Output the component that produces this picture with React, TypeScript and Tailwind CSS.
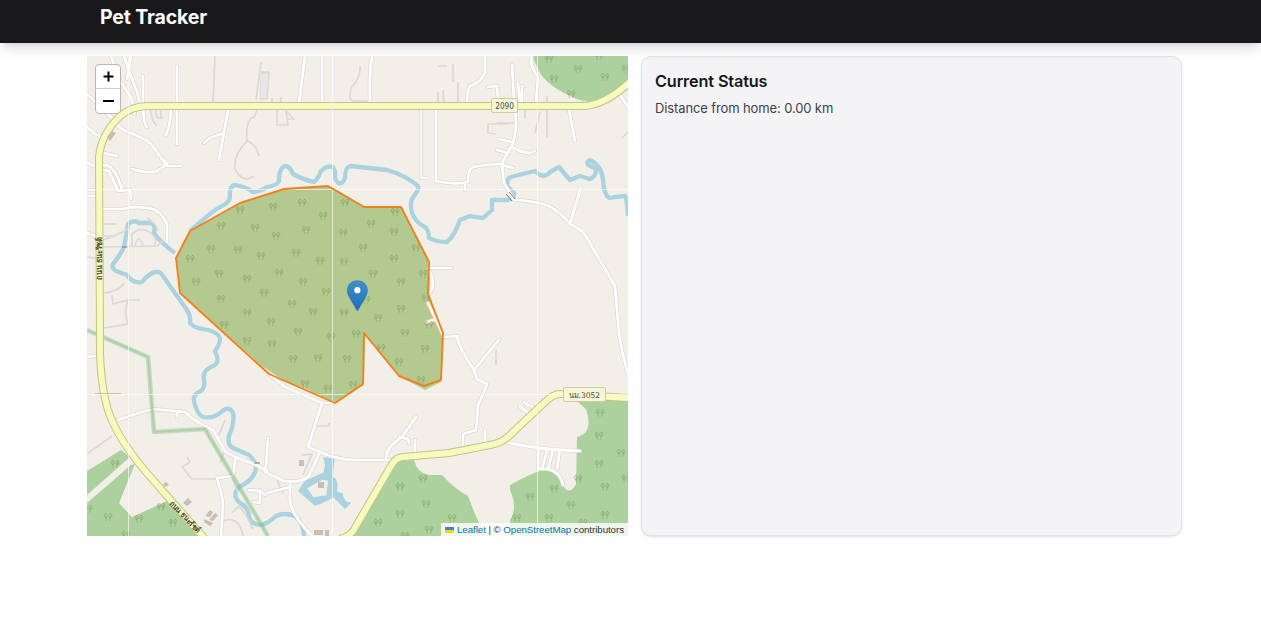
import React from "react";

const FOREST = "176,258 190,231 240,203 284,189 330,186 366,207 402,208 430,262 429,294 443,333 441,382 425,390 399,376 365,335 364,385 335,404 309,390 285,381 262,366 180,293";
const FENCE = "176,258 190,231 240,203 284,189 328,186 364,207 401,207 429,262 428,294 443,333 441,380 424,386 399,376 364,333 363,384 335,403 269,374 180,293";

const RIVERS = [
  "M175 253Q162 244 154 233Q156 224 150 223L139 223Q134 219 128 224Q126 236 124 247Q119 257 113 264Q111 268 116 271L127 275Q133 284 142 282Q149 273 156 272Q160 271 163 276L187 310Q191 316 190 323Q194 328 203 329Q215 331 219 336Q222 341 215 351Q221 363 213 366Q202 370 204 380Q206 390 197 393Q192 397 195 405Q198 415 203 417Q214 419 221 412Q229 405 233 413Q235 421 229 436Q227 445 233 448L249 455Q258 463 255 472Q252 481 239 487Q231 495 240 503Q248 507 249 516Q251 525 261 525Q269 523 276 516Q284 512 295 516Q304 523 304 537",
  "M190 231L204 219Q213 211 220 207Q230 203 230 196Q229 185 236 185Q246 187 253 192Q262 191 267 187Q278 185 279 181Q279 168 285 166Q290 166 293 174Q304 180 314 182Q318 179 321 171Q327 165 333 167Q336 171 335 178Q340 189 345 178Q345 167 350 166L387 170Q405 175 418 186Q420 188 414 196Q409 201 412 213Q416 223 425 227Q429 230 429 238Q436 242 447 242Q455 235 460 220L470 216L483 218L492 210V200H507Q515 199 514 193L507 186Q507 178 511 177Q522 174 535 171Q544 180 550 172L559 167L570 180L580 176L590 179Q598 175 595 168Q583 164 590 160Q602 166 603 180Q604 195 609 198Q622 196 625 196Q627 199 628 216",
];

const ROADS = [
  "M111 56Q117 78 124 87Q134 100 135 113M124 56L130 74Q139 95 140 105M131 56Q129 69 127 79",
  "M143 76V106L144 119Q145 125 147 127M177 66V144M171 109Q170 128 166 135M228 110L219 160M222 134Q209 137 204 143",
  "M87 94L112 118Q119 129 128 132Q146 139 151 144Q160 156 166 165M166 165L157 171Q148 174 132 169M164 160L168 166L181 166",
  "M87 127Q94 134 101 137M99 152L117 156M99 169L109 171L118 191L130 190L131 199M87 162Q96 169 104 165Q115 165 122 190M87 190H97M87 196H97",
  "M102 209H122Q135 206 148 208Q160 209 167 224L167 242M87 233L99 237M87 357L99 355",
  "M305 56L299 103M322 56V103M372 56Q369 75 370 103M436 109V181Q456 185 468 182Q468 169 473 167Q487 164 501 164M465 183V190",
  "M485 56V72Q481 83 470 86Q467 92 467 103M512 65L514 100Q519 133 511 147Q503 160 502 165L504 183L514 200Q542 201 554 209Q567 219 570 224Q583 230 587 238L615 286L619 334Q622 354 628 374",
  "M502 165L513 168M508 153L497 150M512 147Q528 156 535 151M512 142L499 139M570 224L581 187M569 110L575 141M536 103L538 77Q529 66 532 56M518 83L520 103M522 86V102M488 87L497 86L498 100M621 96L630 110",
  "M429 268H451M429 294Q436 284 430 272M427 322L436 319M428 303L444 337L457 336Q459 348 474 370L499 340M474 370L477 379L487 384Q483 395 478 405L476 430L463 434V448M485 431V443M520 407L531 414M524 402L535 409",
  "M506 442Q534 449 580 451M538 448V469H547Q560 471 563 485M547 450L542 469M553 450L548 469M560 450L557 469",
  "M335 403L322 403L308 447L330 456Q349 461 362 460L394 460M269 374L285 387L322 403M416 417L402 437Q386 447 386 459M400 437L408 439L409 443M415 440V455",
  "M319 454L309 476Q302 483 284 481L267 473M268 438L266 466Q263 474 267 471L254 464Q232 457 225 451L213 430Q198 424 185 412L154 409Q140 412 118 420M177 412V417M267 493L290 487M290 481V495Q287 510 312 536M236 457L233 476L217 478Q223 497 223 505L221 536M249 490Q261 490 265 495M253 502L260 503V490",
];

const MINOR = [
  "M215 56L213 103M261 62L256 100M261 72H269L267 99H260M257 110L254 117Q245 120 247 141M247 141Q233 155 235 169Q243 184 254 176M247 141Q256 144 259 156M360 66Q361 77 352 87Q346 103 358 101H370M150 109L153 121L157 126M156 109Q156 122 163 117M161 108V118M272 98V103M281 97V103M277 109V125H288L286 111L294 119H287M438 66H447M438 92V104M443 90L444 103M453 64V82M458 82V103M497 123H515V110M525 110V119M508 124L488 124V133L496 134M547 96V137M540 112L535 133M628 132L622 138",
  "M147 218Q156 223 158 231M104 224H116M104 236H114M129 228Q117 236 102 240M87 257L99 259M112 295L113 304L128 300L140 300M128 300Q123 313 128 324Q112 327 102 328M104 293Q120 291 124 283M104 247L157 246L164 240M132 246V234Q141 226 151 233Q158 240 154 245M135 246Q138 232 143 245M87 454L112 436M187 457L190 462L182 467L192 479H216M225 420L219 435M225 450L220 463M232 478L238 492M317 426H329V423M302 455L312 454L303 475M277 480L283 494M232 513L239 506L246 515Q250 523 253 529M223 521Q239 515 243 536M496 365V350",
];

const TREES = [
  [240,210],[273,207],[302,203],[345,203],[221,226],[255,228],[276,236],[306,230],[323,216],[343,233],[371,224],[394,232],[395,212],
  [190,259],[211,249],[238,250],[261,256],[296,253],[320,261],[344,262],[363,248],[394,259],[416,248],
  [196,282],[219,274],[247,279],[264,293],[279,273],[303,282],[326,292],[373,274],[401,282],[423,274],[426,298],
  [221,299],[247,313],[292,304],[313,312],[344,313],[366,300],[378,318],[401,309],[429,325],
  [224,325],[247,341],[271,322],[298,332],[331,337],[356,334],[405,333],[272,344],[293,359],[318,358],[347,359],[381,348],[399,362],[425,349],
  [305,384],[328,389],[353,385],[421,380],
  [549,59],[578,69],[554,79],[605,77],[599,56],[571,94],[626,69],
  [600,413],[599,436],[621,453],[599,464],[578,479],[605,487],[554,489],[530,497],[571,505],[605,515],[583,523],[549,518],[517,518],[626,479],
  [400,487],[423,479],[426,504],[400,514],[378,523],[429,530],[452,518],[405,536],
  [115,464],[88,509],[108,517],[139,519],[173,523],[161,507],[126,535],
];

function MapDrawing() {
  return (
    <svg className="block h-full w-full" viewBox="87 56 541 480" role="img" aria-label="Map">
      <rect x="87" y="56" width="541" height="480" fill="#f2efe9" />
      <g fill="#add19e">
        <path d="M532 56H628V82Q615 99 601 101Q584 104 568 95Q543 83 537 67Z" />
        <path d="M393 461L414 460Q417 473 429 475L442 475Q455 489 468 496L475 514L485 536H362L352 536Z" />
        <path d="M578 402L628 397V536H510V520Q518 508 510 490V485Q537 470 548 469Q562 472 563 486Q570 496 576 484L577 437Q594 433 586 409Z" />
        <path d="M87 471L121 450L130 457L87 495ZM87 503L131 465L135 464L119 503L132 517L167 501L204 536H87Z" />
      </g>
      <g fill="none" stroke="#aad3df" strokeWidth="4.3" strokeLinejoin="round">
        {RIVERS.map((d) => <path key={d} d={d} />)}
      </g>
      <path d="M324 458L334 459L332 477Q339 481 336 492L342 494Q344 504 350 503L345 508L333 496Q328 501 315 505L299 491L305 482L324 473L326 465ZM322 479L306 488L313 498L327 496L329 480Z" fill="#aad3df" stroke="#aad3df" strokeWidth="1.5" strokeLinejoin="round" fillRule="evenodd" />
      <polygon points={FOREST} fill="#add19e" />

      <g fill="none" strokeLinejoin="round">
        {MINOR.map((d) => <path key={d} d={d} stroke="#dcd8d6" strokeWidth="1.7" />)}
        <path d="M261 73H269L267 98L260 99Z" fill="#e9e7e6" stroke="#d5d2d3" strokeWidth="0.7" />
        <path d="M421 110V178L429 178" stroke="#d6d2d1" strokeWidth="4" />
        <path d="M421 110V178L429 178" stroke="#f8f7f6" strokeWidth="2.8" />
        {ROADS.map((d) => <path key={d} d={d} stroke="#dad6d3" strokeWidth="4" strokeLinecap="round" />)}
        {ROADS.map((d) => <path key={d} d={d} stroke="#fff" strokeWidth="2.7" strokeLinecap="round" />)}
        <path d="M87 330L148 357L154 432L205 429L268 536" stroke="#7ab778" strokeOpacity=".38" strokeWidth="4.5" />
        <path d="M87 330L148 357L154 432L205 429L268 536" stroke="#8cbe88" strokeOpacity=".4" strokeWidth="1.5" />
        {["#c2c583", "#f7fabf"].map((stroke, i) => (
          <g key={stroke} stroke={stroke} strokeWidth={i === 0 ? 8 : 6}>
            <path d="M206 540L167 496L147 473Q118 439 109 413Q99 383 100 335L99 157Q101 135 119 117Q132 106 147 106H580Q603 107 630 82" />
            <path d="M340 539Q352 536 356 526L391 466Q396 457 403 457L449 453L490 445Q503 443 511 434L545 402Q554 393 562 394L630 398" />
          </g>
        ))}
      </g>

      <g fill="#c9bdb5">
        <path d="M107 137L112 131L116 133L110 141ZM183 503L188 498L192 502L187 506ZM163 484L166 482L169 485L165 487Z" />
        <path d="M205 516L210 510L213 512L210 517ZM209 520L215 513L218 515L213 521ZM204 519L213 523L210 526L204 522ZM299 460H304V466H299ZM318 482H324V488H318ZM314 530H323V535H314ZM325 530H329V536H325Z" />
        <path d="M506 194L512 201M509 192L515 199M254 463H260M122 247H127" stroke="#777" strokeWidth="1" />
      </g>

      <polygon points={FENCE} fill="#ff7800" fillOpacity=".09" />
      <g fill="none" stroke="#708b51" strokeOpacity=".42" strokeWidth=".9" strokeLinecap="round">
        {TREES.map(([x, y], i) => (
          <path key={i} transform={`translate(${x} ${y})`} d="M-2.2 -3.6C-4.6 -3.4 -4.3 .6 -2.2 .6C-.2 .6 -.1 -3.5 -2.2 -3.6M-2.2 -1.5L-1.8 3.5M2.4 -3.6C.1 -3.4 .4 .6 2.4 .6C4.5 .6 4.5 -3.5 2.4 -3.6M2.4 -1.5L1.8 3.5" />
        ))}
      </g>
      <path d="M128.5 56V536M332.5 56V536M537.5 56V536M87 189.5H628M87 394.5H628" stroke="#fff" strokeOpacity=".62" />
      <path d="M95 393.5H121" stroke="#aaa66b" strokeOpacity=".6" />
      <polygon points={FENCE} fill="none" stroke="#f2811d" strokeWidth="1.9" strokeLinejoin="round" />

      <g fill="#f5f6d5" stroke="#cccda0">
        <rect x="491.5" y="98.5" width="26" height="14" rx="1.5" />
        <rect x="563.5" y="387.5" width="42" height="14" rx="1.5" />
      </g>
      <g fill="#4b4b3d" textAnchor="middle" className="font-['DejaVu_Sans','Noto_Sans',sans-serif]">
        <text x="504.5" y="108.7" fontSize="8" textLength="18.5" lengthAdjust="spacingAndGlyphs">2090</text>
        <text x="584.5" y="397.5" fontSize="7.8" textLength="31" lengthAdjust="spacingAndGlyphs">นม.3052</text>
        <text transform="translate(102 258.5) rotate(-90)" fontSize="8" fontWeight="600" textLength="42" lengthAdjust="spacingAndGlyphs">ถนน ธนะรัชต์</text>
        <text transform="translate(183 518.5) rotate(47)" fontSize="8" fontWeight="600" textLength="41" lengthAdjust="spacingAndGlyphs">ถนน ธนะรัชต์</text>
      </g>

      <defs>
        <linearGradient id="pin-blue" x1="0" y1="0" x2="0" y2="1">
          <stop stopColor="#4290cf" />
          <stop offset="1" stopColor="#1b6cb5" />
        </linearGradient>
      </defs>
      <path d="M357.4 311L349.5 297.5Q347.4 294 347.4 290.5C347.4 277.5 367.4 277.5 367.4 290.5Q367.4 294 365.2 297.5Z" fill="url(#pin-blue)" stroke="#2e79b7" strokeWidth=".7" />
      <circle cx="357.4" cy="290.2" r="3.1" fill="#fff" />
    </svg>
  );
}

function MapPanel() {
  return (
    <section className="relative h-[480px] w-[541px] shrink-0 overflow-hidden">
      <MapDrawing />
      <div className="absolute left-2 top-2 flex h-[50px] w-[26px] flex-col overflow-hidden rounded-sm border border-[#b9b7b3] bg-white text-black">
        <button aria-label="Zoom in" className="flex h-6 items-center justify-center border-b border-[#ccc] pl-px">
          <svg width="11" height="11" viewBox="0 0 11 11"><path d="M5.5 .5V10.5M.5 5.5H10.5" stroke="currentColor" strokeWidth="2" /></svg>
        </button>
        <button aria-label="Zoom out" className="flex h-6 items-center justify-center pl-px">
          <svg width="11" height="12" viewBox="0 0 11 12"><path d="M0 6H11" stroke="currentColor" strokeWidth="2" /></svg>
        </button>
      </div>
      <div className="absolute bottom-0 right-0 flex h-[13px] w-[187px] items-center whitespace-pre bg-white/80 pl-1 font-['Liberation_Sans',sans-serif] text-[9.75px] leading-[13px] tracking-[-0.07px] text-[#333]">
        <svg className="mr-[3px] h-[6px] w-[9px] shrink-0" viewBox="0 0 9 6"><path fill="#4c7be1" d="M0 0H9V3H0Z" /><path fill="#ffd500" d="M0 3H9V6H0Z" /></svg>
        <span className="text-[#0078a8]">Leaflet</span>
        <span> | © </span>
        <span className="text-[#0078a8]">OpenStreetMap</span>
        <span> contributors</span>
      </div>
    </section>
  );
}

export default function App() {
  return (
    <div className="h-[629px] overflow-hidden bg-white font-['Inter',sans-serif]">
      <header className="relative h-[43px] bg-[#18181b] pl-[100px] pt-[4px] shadow-[0_8px_12px_-2px_rgba(0,0,0,0.12),0_3px_5px_-3px_rgba(0,0,0,0.12)]">
        <h1 className="text-[19.5px] font-bold leading-[26px] tracking-[-0.15px] text-white">Pet Tracker</h1>
      </header>
      <main className="ml-[87px] mt-[13px] flex gap-[13px]">
        <MapPanel />
        <aside className="h-[480px] w-[541px] rounded-[10px] border border-[#e4e4e7] bg-[#f4f4f6] px-[13px] pt-[13px] shadow-sm">
          <h2 className="text-[16.25px] font-semibold leading-[23px] tracking-[-0.14px] text-[#18181b]">Current Status</h2>
          <p className="mt-[6px] text-[13px] leading-[19px] tracking-[-0.12px] text-[#3f3f46]">Distance from home: 0.00 km</p>
        </aside>
      </main>
    </div>
  );
}
